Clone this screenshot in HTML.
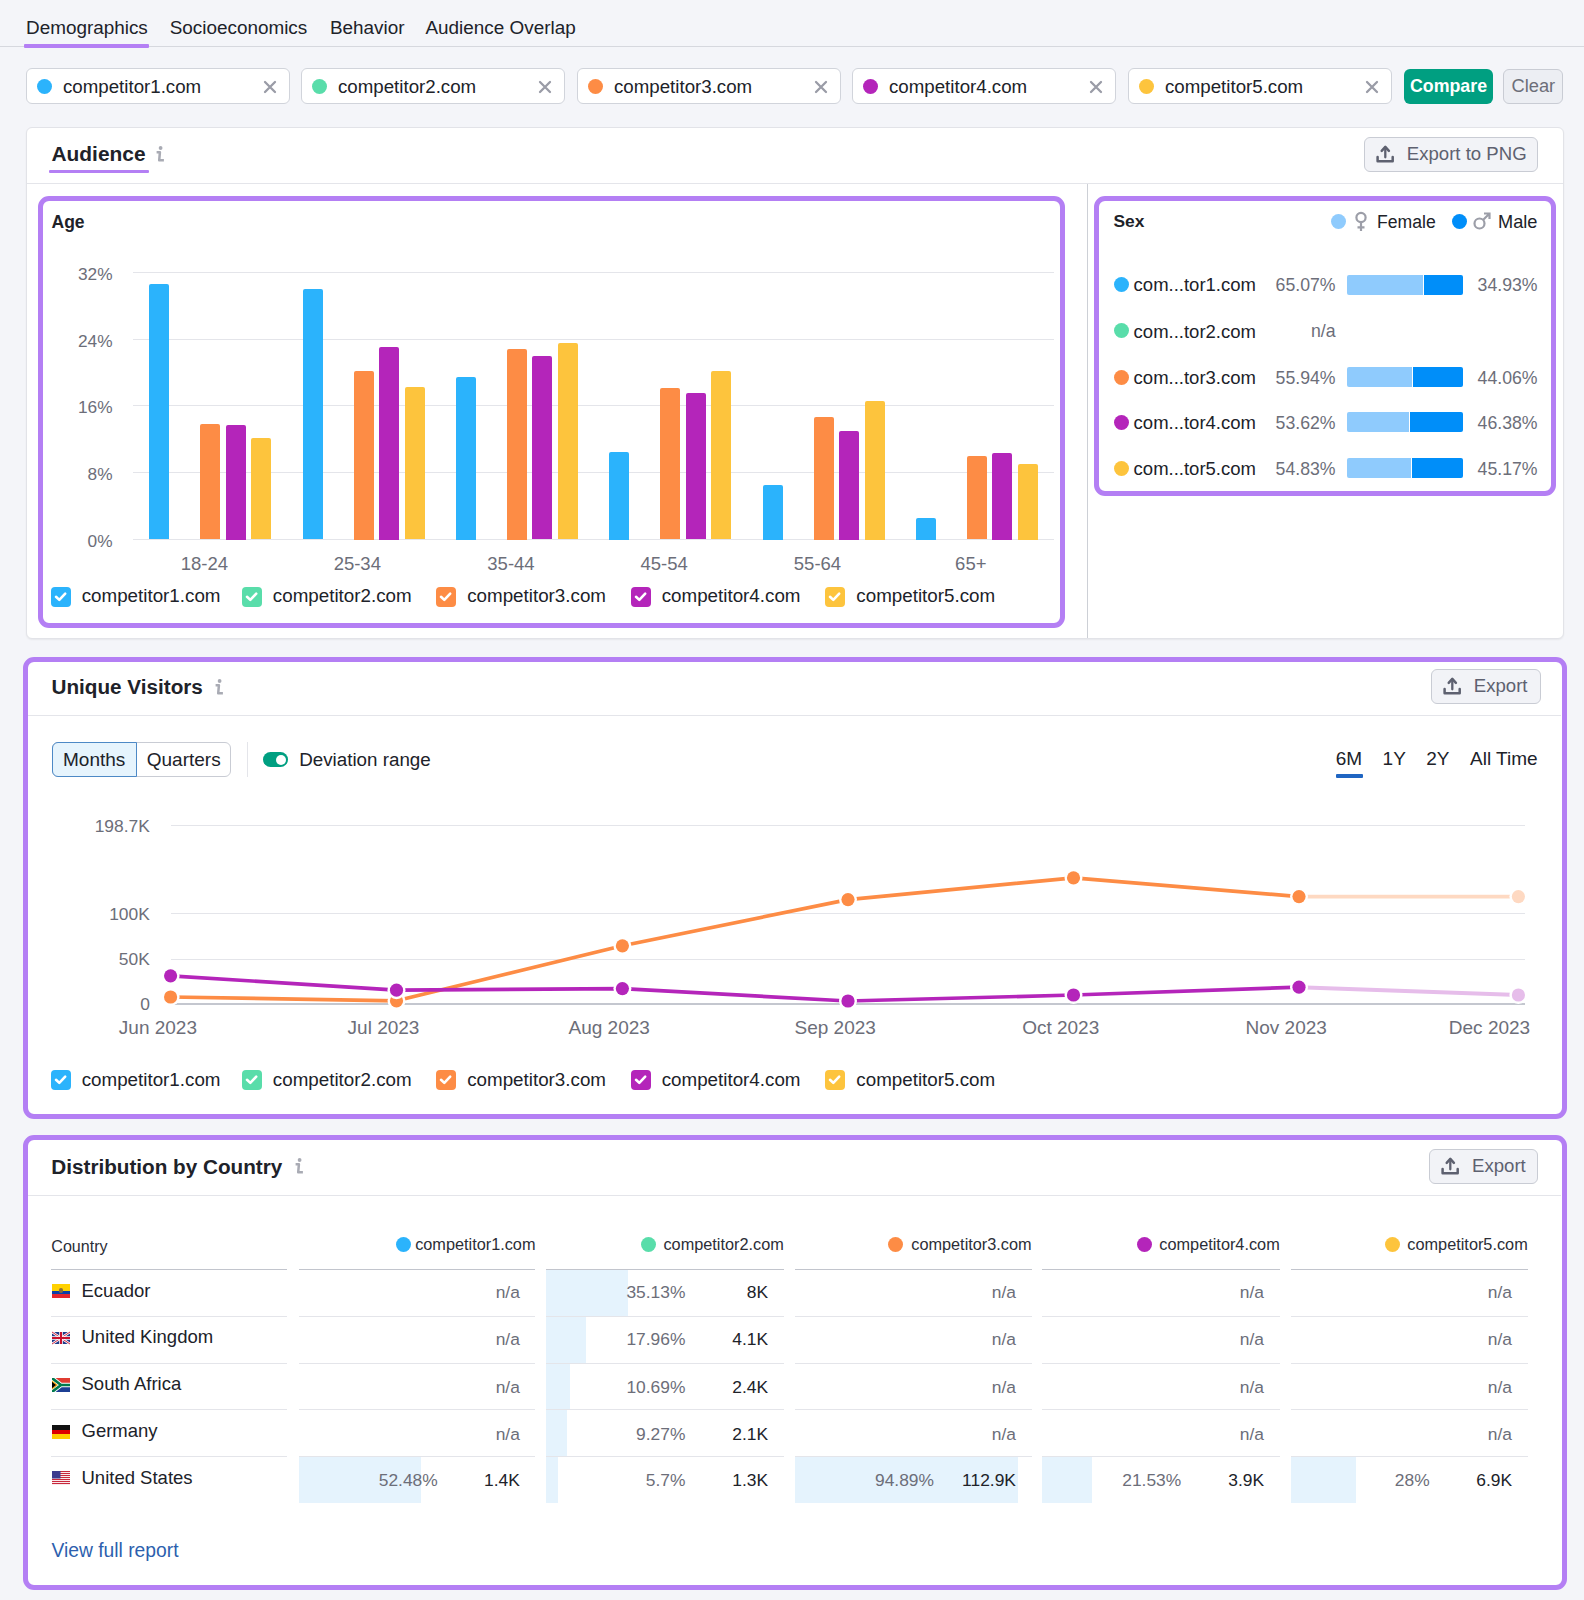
<!DOCTYPE html>
<html><head><meta charset="utf-8"><style>
html,body{margin:0;padding:0;}
body{width:1584px;height:1600px;background:#f4f5f9;position:relative;overflow:hidden;font-family:"Liberation Sans", sans-serif;}
.t{position:absolute;white-space:nowrap;}
.r{position:absolute;}
</style></head><body>
<div class="r" style="left:0.0px;top:46.0px;width:1584.0px;height:1.0px;background:#d6d8de;"></div>
<div class="t" style="left:26.0px;top:17px;font-size:18.9px;line-height:21px;color:#202229;">Demographics</div>
<div class="t" style="left:169.7px;top:17px;font-size:18.9px;line-height:21px;color:#202229;">Socioeconomics</div>
<div class="t" style="left:330.0px;top:17px;font-size:18.9px;line-height:21px;color:#202229;">Behavior</div>
<div class="t" style="left:425.5px;top:17px;font-size:18.9px;line-height:21px;color:#202229;">Audience Overlap</div>
<div class="r" style="left:24.0px;top:43.5px;width:125.0px;height:4.0px;background:#b47ff4;border-radius:1px;"></div>
<div class="r" style="left:26.0px;top:68.0px;width:264.0px;height:35.5px;background:#fff;border:1px solid #d1d4db;border-radius:6px;box-sizing:border-box;"></div>
<div class="r" style="left:36.8px;top:78.5px;width:15.4px;height:15.4px;background:#2bb3fc;border-radius:50%;"></div>
<div class="t" style="left:63.0px;top:76px;font-size:18.7px;line-height:21px;color:#202229;">competitor1.com</div>
<svg width="14" height="14" viewBox="0 0 14 14" style="position:absolute;left:263px;top:80px"><path d="M2 2 L12 12 M12 2 L2 12" stroke="#9a9ca7" stroke-width="2.3" stroke-linecap="round"/></svg>
<div class="r" style="left:301.0px;top:68.0px;width:264.0px;height:35.5px;background:#fff;border:1px solid #d1d4db;border-radius:6px;box-sizing:border-box;"></div>
<div class="r" style="left:311.8px;top:78.5px;width:15.4px;height:15.4px;background:#59ddaa;border-radius:50%;"></div>
<div class="t" style="left:338.0px;top:76px;font-size:18.7px;line-height:21px;color:#202229;">competitor2.com</div>
<svg width="14" height="14" viewBox="0 0 14 14" style="position:absolute;left:538px;top:80px"><path d="M2 2 L12 12 M12 2 L2 12" stroke="#9a9ca7" stroke-width="2.3" stroke-linecap="round"/></svg>
<div class="r" style="left:577.0px;top:68.0px;width:264.0px;height:35.5px;background:#fff;border:1px solid #d1d4db;border-radius:6px;box-sizing:border-box;"></div>
<div class="r" style="left:587.8px;top:78.5px;width:15.4px;height:15.4px;background:#fd8c45;border-radius:50%;"></div>
<div class="t" style="left:614.0px;top:76px;font-size:18.7px;line-height:21px;color:#202229;">competitor3.com</div>
<svg width="14" height="14" viewBox="0 0 14 14" style="position:absolute;left:814px;top:80px"><path d="M2 2 L12 12 M12 2 L2 12" stroke="#9a9ca7" stroke-width="2.3" stroke-linecap="round"/></svg>
<div class="r" style="left:852.0px;top:68.0px;width:264.0px;height:35.5px;background:#fff;border:1px solid #d1d4db;border-radius:6px;box-sizing:border-box;"></div>
<div class="r" style="left:862.8px;top:78.5px;width:15.4px;height:15.4px;background:#b425ba;border-radius:50%;"></div>
<div class="t" style="left:889.0px;top:76px;font-size:18.7px;line-height:21px;color:#202229;">competitor4.com</div>
<svg width="14" height="14" viewBox="0 0 14 14" style="position:absolute;left:1089px;top:80px"><path d="M2 2 L12 12 M12 2 L2 12" stroke="#9a9ca7" stroke-width="2.3" stroke-linecap="round"/></svg>
<div class="r" style="left:1128.0px;top:68.0px;width:264.0px;height:35.5px;background:#fff;border:1px solid #d1d4db;border-radius:6px;box-sizing:border-box;"></div>
<div class="r" style="left:1138.8px;top:78.5px;width:15.4px;height:15.4px;background:#fdc43d;border-radius:50%;"></div>
<div class="t" style="left:1165.0px;top:76px;font-size:18.7px;line-height:21px;color:#202229;">competitor5.com</div>
<svg width="14" height="14" viewBox="0 0 14 14" style="position:absolute;left:1365px;top:80px"><path d="M2 2 L12 12 M12 2 L2 12" stroke="#9a9ca7" stroke-width="2.3" stroke-linecap="round"/></svg>
<div class="r" style="left:1404.0px;top:68.5px;width:89.0px;height:35.5px;background:#009f81;border-radius:6px;"></div>
<div class="t" style="left:1148.5px;width:600px;text-align:center;top:76px;font-size:17.8px;line-height:20px;color:#fff;font-weight:700;">Compare</div>
<div class="r" style="left:1503.4px;top:68.5px;width:59.6px;height:35.5px;background:#eceef3;border:1px solid #c9ccd4;border-radius:6px;box-sizing:border-box;"></div>
<div class="t" style="left:1233.3px;width:600px;text-align:center;top:75px;font-size:18.3px;line-height:21px;color:#6c6e79;">Clear</div>
<div class="r" style="left:26.0px;top:127.0px;width:1537.5px;height:512.0px;background:#fff;border:1px solid #e2e3e8;border-radius:6px;box-sizing:border-box;box-shadow:0 1px 2px rgba(0,0,0,0.06);"></div>
<div class="t" style="left:51.5px;top:142px;font-size:20.9px;line-height:23px;color:#202229;font-weight:700;">Audience</div>
<div class="r" style="left:49.0px;top:170.0px;width:100.2px;height:3.0px;background:#b47ff4;border-radius:1px;"></div>
<svg width="12" height="18" viewBox="0 0 12 18" style="position:absolute;left:155.4px;top:144.7px"><circle cx="5.6" cy="3" r="1.9" fill="#a9abb4"/><path d="M1.6 7.3 H4.9 L4.2 15.3 H8.9" stroke="#a9abb4" stroke-width="2.5" fill="none" stroke-linejoin="round"/></svg>
<div class="r" style="left:1364.1px;top:136.9px;width:173.7px;height:35.0px;background:#f2f3f7;border:1px solid #c9ccd4;border-radius:6px;box-sizing:border-box;"></div>
<svg width="18" height="18" viewBox="0 0 18 18" style="position:absolute;left:1376px;top:145.0px;overflow:visible"><path d="M5.7 5.8 L9.3 1.9 L12.9 5.8" stroke="#5e6170" stroke-width="2.5" fill="none" stroke-linecap="round" stroke-linejoin="round"/><path d="M9.3 2.6 V12.3" stroke="#5e6170" stroke-width="2.3" fill="none" stroke-linecap="round"/><path d="M1.6 11.9 V16.3 H16.7 V11.9" stroke="#5e6170" stroke-width="2.5" fill="none" stroke-linecap="round" stroke-linejoin="round"/></svg>
<div class="t" style="left:1406.8px;top:143px;font-size:18.6px;line-height:21px;color:#5e6170;">Export to PNG</div>
<div class="r" style="left:27.0px;top:183.0px;width:1536.0px;height:1.0px;background:#e4e5ea;"></div>
<div class="r" style="left:1086.5px;top:184.0px;width:1.0px;height:454.0px;background:#cdd0d6;"></div>
<div class="r" style="left:38.0px;top:196.3px;width:1027.0px;height:431.5px;border:5px solid #b47ff4;border-radius:11px;box-sizing:border-box;"></div>
<div class="t" style="left:51.5px;top:212px;font-size:17.5px;line-height:20px;color:#202229;font-weight:700;">Age</div>
<div class="r" style="left:133.4px;top:539.0px;width:920.9px;height:1.0px;background:#e4e5ea;"></div>
<div class="t" style="right:1471.5px;text-align:right;top:531px;font-size:17.3px;line-height:20px;color:#6c6e79;">0%</div>
<div class="r" style="left:133.4px;top:472.2px;width:920.9px;height:1.0px;background:#e4e5ea;"></div>
<div class="t" style="right:1471.5px;text-align:right;top:464px;font-size:17.3px;line-height:20px;color:#6c6e79;">8%</div>
<div class="r" style="left:133.4px;top:405.3px;width:920.9px;height:1.0px;background:#e4e5ea;"></div>
<div class="t" style="right:1471.5px;text-align:right;top:397px;font-size:17.3px;line-height:20px;color:#6c6e79;">16%</div>
<div class="r" style="left:133.4px;top:338.5px;width:920.9px;height:1.0px;background:#e4e5ea;"></div>
<div class="t" style="right:1471.5px;text-align:right;top:331px;font-size:17.3px;line-height:20px;color:#6c6e79;">24%</div>
<div class="r" style="left:133.4px;top:271.8px;width:920.9px;height:1.0px;background:#e4e5ea;"></div>
<div class="t" style="right:1471.5px;text-align:right;top:264px;font-size:17.3px;line-height:20px;color:#6c6e79;">32%</div>
<div class="r" style="left:149.3px;top:283.6px;width:20.0px;height:255.9px;background:#2bb3fc;border-radius:2px 2px 0 0;"></div>
<div class="r" style="left:200.3px;top:424.2px;width:20.0px;height:115.3px;background:#fd8c45;border-radius:2px 2px 0 0;"></div>
<div class="r" style="left:225.8px;top:424.5px;width:20.0px;height:115.0px;background:#b425ba;border-radius:2px 2px 0 0;"></div>
<div class="r" style="left:251.3px;top:438.4px;width:20.0px;height:101.1px;background:#fdc43d;border-radius:2px 2px 0 0;"></div>
<div class="r" style="left:302.6px;top:289.1px;width:20.0px;height:250.4px;background:#2bb3fc;border-radius:2px 2px 0 0;"></div>
<div class="r" style="left:353.6px;top:370.5px;width:20.0px;height:169.0px;background:#fd8c45;border-radius:2px 2px 0 0;"></div>
<div class="r" style="left:379.1px;top:347.0px;width:20.0px;height:192.5px;background:#b425ba;border-radius:2px 2px 0 0;"></div>
<div class="r" style="left:404.6px;top:386.6px;width:20.0px;height:152.9px;background:#fdc43d;border-radius:2px 2px 0 0;"></div>
<div class="r" style="left:455.9px;top:377.0px;width:20.0px;height:162.5px;background:#2bb3fc;border-radius:2px 2px 0 0;"></div>
<div class="r" style="left:506.9px;top:348.5px;width:20.0px;height:191.0px;background:#fd8c45;border-radius:2px 2px 0 0;"></div>
<div class="r" style="left:532.4px;top:355.6px;width:20.0px;height:183.9px;background:#b425ba;border-radius:2px 2px 0 0;"></div>
<div class="r" style="left:557.9px;top:343.4px;width:20.0px;height:196.1px;background:#fdc43d;border-radius:2px 2px 0 0;"></div>
<div class="r" style="left:609.2px;top:452.0px;width:20.0px;height:87.5px;background:#2bb3fc;border-radius:2px 2px 0 0;"></div>
<div class="r" style="left:660.2px;top:387.6px;width:20.0px;height:151.9px;background:#fd8c45;border-radius:2px 2px 0 0;"></div>
<div class="r" style="left:685.7px;top:393.2px;width:20.0px;height:146.3px;background:#b425ba;border-radius:2px 2px 0 0;"></div>
<div class="r" style="left:711.2px;top:371.2px;width:20.0px;height:168.3px;background:#fdc43d;border-radius:2px 2px 0 0;"></div>
<div class="r" style="left:762.5px;top:485.0px;width:20.0px;height:54.5px;background:#2bb3fc;border-radius:2px 2px 0 0;"></div>
<div class="r" style="left:813.5px;top:416.8px;width:20.0px;height:122.8px;background:#fd8c45;border-radius:2px 2px 0 0;"></div>
<div class="r" style="left:839.0px;top:430.5px;width:20.0px;height:109.0px;background:#b425ba;border-radius:2px 2px 0 0;"></div>
<div class="r" style="left:864.5px;top:400.5px;width:20.0px;height:139.0px;background:#fdc43d;border-radius:2px 2px 0 0;"></div>
<div class="r" style="left:915.8px;top:518.0px;width:20.0px;height:21.5px;background:#2bb3fc;border-radius:2px 2px 0 0;"></div>
<div class="r" style="left:966.8px;top:456.2px;width:20.0px;height:83.2px;background:#fd8c45;border-radius:2px 2px 0 0;"></div>
<div class="r" style="left:992.3px;top:453.0px;width:20.0px;height:86.5px;background:#b425ba;border-radius:2px 2px 0 0;"></div>
<div class="r" style="left:1017.8px;top:463.8px;width:20.0px;height:75.8px;background:#fdc43d;border-radius:2px 2px 0 0;"></div>
<div class="t" style="left:-95.6px;width:600px;text-align:center;top:553px;font-size:18.5px;line-height:21px;color:#6c6e79;">18-24</div>
<div class="t" style="left:57.3px;width:600px;text-align:center;top:553px;font-size:18.5px;line-height:21px;color:#6c6e79;">25-34</div>
<div class="t" style="left:211.0px;width:600px;text-align:center;top:553px;font-size:18.5px;line-height:21px;color:#6c6e79;">35-44</div>
<div class="t" style="left:364.2px;width:600px;text-align:center;top:553px;font-size:18.5px;line-height:21px;color:#6c6e79;">45-54</div>
<div class="t" style="left:517.5px;width:600px;text-align:center;top:553px;font-size:18.5px;line-height:21px;color:#6c6e79;">55-64</div>
<div class="t" style="left:670.8px;width:600px;text-align:center;top:553px;font-size:18.5px;line-height:21px;color:#6c6e79;">65+</div>
<div class="r" style="left:51.4px;top:586.5px;width:20px;height:20px;background:#2bb3fc;border-radius:4px;"><svg width="20" height="20" viewBox="0 0 20 20" style="position:absolute;left:0;top:0"><path d="M5 9.8 L8.3 12.9 L14.2 6.7" stroke="#fff" stroke-width="2.6" fill="none" stroke-linecap="round" stroke-linejoin="round"/></svg></div>
<div class="t" style="left:81.7px;top:585px;font-size:18.8px;line-height:21px;color:#202229;">competitor1.com</div>
<div class="r" style="left:242px;top:586.5px;width:20px;height:20px;background:#59ddaa;border-radius:4px;"><svg width="20" height="20" viewBox="0 0 20 20" style="position:absolute;left:0;top:0"><path d="M5 9.8 L8.3 12.9 L14.2 6.7" stroke="#fff" stroke-width="2.6" fill="none" stroke-linecap="round" stroke-linejoin="round"/></svg></div>
<div class="t" style="left:272.8px;top:585px;font-size:18.8px;line-height:21px;color:#202229;">competitor2.com</div>
<div class="r" style="left:436.4px;top:586.5px;width:20px;height:20px;background:#fd8c45;border-radius:4px;"><svg width="20" height="20" viewBox="0 0 20 20" style="position:absolute;left:0;top:0"><path d="M5 9.8 L8.3 12.9 L14.2 6.7" stroke="#fff" stroke-width="2.6" fill="none" stroke-linecap="round" stroke-linejoin="round"/></svg></div>
<div class="t" style="left:467.2px;top:585px;font-size:18.8px;line-height:21px;color:#202229;">competitor3.com</div>
<div class="r" style="left:630.9px;top:586.5px;width:20px;height:20px;background:#b425ba;border-radius:4px;"><svg width="20" height="20" viewBox="0 0 20 20" style="position:absolute;left:0;top:0"><path d="M5 9.8 L8.3 12.9 L14.2 6.7" stroke="#fff" stroke-width="2.6" fill="none" stroke-linecap="round" stroke-linejoin="round"/></svg></div>
<div class="t" style="left:661.7px;top:585px;font-size:18.8px;line-height:21px;color:#202229;">competitor4.com</div>
<div class="r" style="left:825px;top:586.5px;width:20px;height:20px;background:#fdc43d;border-radius:4px;"><svg width="20" height="20" viewBox="0 0 20 20" style="position:absolute;left:0;top:0"><path d="M5 9.8 L8.3 12.9 L14.2 6.7" stroke="#fff" stroke-width="2.6" fill="none" stroke-linecap="round" stroke-linejoin="round"/></svg></div>
<div class="t" style="left:856.3px;top:585px;font-size:18.8px;line-height:21px;color:#202229;">competitor5.com</div>
<div class="r" style="left:1094.1px;top:196.4px;width:462.4px;height:299.9px;border:5px solid #b47ff4;border-radius:11px;box-sizing:border-box;"></div>
<div class="t" style="left:1113.4px;top:211px;font-size:17.4px;line-height:20px;color:#202229;font-weight:700;">Sex</div>
<div class="r" style="left:1330.5px;top:214.2px;width:15.0px;height:15.0px;background:#8fcbfd;border-radius:50%;"></div>
<div class="r" style="left:1451.5px;top:214.2px;width:15.0px;height:15.0px;background:#008ef9;border-radius:50%;"></div>
<svg width="16" height="22" viewBox="0 0 16 22" style="position:absolute;left:1353px;top:211px"><circle cx="8" cy="6.5" r="4.6" stroke="#9c9ea8" stroke-width="2.2" fill="none"/><path d="M8 11 V20 M4.5 16.3 H11.5" stroke="#9c9ea8" stroke-width="2.2" fill="none"/></svg>
<svg width="20" height="20" viewBox="0 0 20 20" style="position:absolute;left:1472px;top:211px"><circle cx="7.5" cy="12.5" r="5" stroke="#9c9ea8" stroke-width="2.2" fill="none"/><path d="M11 9 L17.5 2.5 M12 2.5 H17.5 V8" stroke="#9c9ea8" stroke-width="2.2" fill="none"/></svg>
<div class="t" style="left:1377.0px;top:212px;font-size:17.6px;line-height:20px;color:#202229;">Female</div>
<div class="t" style="left:1498.0px;top:212px;font-size:18.2px;line-height:20px;color:#202229;">Male</div>
<div class="r" style="left:1113.5px;top:277.3px;width:15.0px;height:15.0px;background:#2bb3fc;border-radius:50%;"></div>
<div class="t" style="left:1133.6px;top:274px;font-size:18.5px;line-height:21px;color:#202229;">com...tor1.com</div>
<div class="t" style="right:248.4px;text-align:right;top:275px;font-size:17.7px;line-height:20px;color:#6c6e79;">65.07%</div>
<div class="r" style="left:1346.6px;top:274.8px;width:76.0px;height:20.0px;background:#8fcbfd;border-radius:2px 0 0 2px;"></div>
<div class="r" style="left:1423.6px;top:274.8px;width:39.8px;height:20.0px;background:#008ef9;border-radius:0 2px 2px 0;"></div>
<div class="t" style="right:46.4px;text-align:right;top:275px;font-size:17.7px;line-height:20px;color:#6c6e79;">34.93%</div>
<div class="r" style="left:1113.5px;top:323.4px;width:15.0px;height:15.0px;background:#59ddaa;border-radius:50%;"></div>
<div class="t" style="left:1133.6px;top:321px;font-size:18.5px;line-height:21px;color:#202229;">com...tor2.com</div>
<div class="t" style="right:248.4px;text-align:right;top:321px;font-size:17.7px;line-height:20px;color:#6c6e79;">n/a</div>
<div class="r" style="left:1113.5px;top:369.8px;width:15.0px;height:15.0px;background:#fd8c45;border-radius:50%;"></div>
<div class="t" style="left:1133.6px;top:367px;font-size:18.5px;line-height:21px;color:#202229;">com...tor3.com</div>
<div class="t" style="right:248.4px;text-align:right;top:368px;font-size:17.7px;line-height:20px;color:#6c6e79;">55.94%</div>
<div class="r" style="left:1346.6px;top:367.3px;width:65.3px;height:20.0px;background:#8fcbfd;border-radius:2px 0 0 2px;"></div>
<div class="r" style="left:1412.9px;top:367.3px;width:50.5px;height:20.0px;background:#008ef9;border-radius:0 2px 2px 0;"></div>
<div class="t" style="right:46.4px;text-align:right;top:368px;font-size:17.7px;line-height:20px;color:#6c6e79;">44.06%</div>
<div class="r" style="left:1113.5px;top:414.9px;width:15.0px;height:15.0px;background:#b425ba;border-radius:50%;"></div>
<div class="t" style="left:1133.6px;top:412px;font-size:18.5px;line-height:21px;color:#202229;">com...tor4.com</div>
<div class="t" style="right:248.4px;text-align:right;top:413px;font-size:17.7px;line-height:20px;color:#6c6e79;">53.62%</div>
<div class="r" style="left:1346.6px;top:412.4px;width:62.6px;height:20.0px;background:#8fcbfd;border-radius:2px 0 0 2px;"></div>
<div class="r" style="left:1410.2px;top:412.4px;width:53.2px;height:20.0px;background:#008ef9;border-radius:0 2px 2px 0;"></div>
<div class="t" style="right:46.4px;text-align:right;top:413px;font-size:17.7px;line-height:20px;color:#6c6e79;">46.38%</div>
<div class="r" style="left:1113.5px;top:460.7px;width:15.0px;height:15.0px;background:#fdc43d;border-radius:50%;"></div>
<div class="t" style="left:1133.6px;top:458px;font-size:18.5px;line-height:21px;color:#202229;">com...tor5.com</div>
<div class="t" style="right:248.4px;text-align:right;top:459px;font-size:17.7px;line-height:20px;color:#6c6e79;">54.83%</div>
<div class="r" style="left:1346.6px;top:458.2px;width:64.0px;height:20.0px;background:#8fcbfd;border-radius:2px 0 0 2px;"></div>
<div class="r" style="left:1411.6px;top:458.2px;width:51.8px;height:20.0px;background:#008ef9;border-radius:0 2px 2px 0;"></div>
<div class="t" style="right:46.4px;text-align:right;top:459px;font-size:17.7px;line-height:20px;color:#6c6e79;">45.17%</div>
<div class="r" style="left:26.0px;top:659.0px;width:1537.5px;height:457.0px;background:#fff;border-radius:6px;"></div>
<div class="r" style="left:23.0px;top:656.5px;width:1544.0px;height:462.5px;border:5px solid #b47ff4;border-radius:11px;box-sizing:border-box;"></div>
<div class="t" style="left:51.5px;top:675px;font-size:20.7px;line-height:23px;color:#202229;font-weight:700;">Unique Visitors</div>
<svg width="12" height="18" viewBox="0 0 12 18" style="position:absolute;left:214.0px;top:678.0px"><circle cx="5.6" cy="3" r="1.9" fill="#a9abb4"/><path d="M1.6 7.3 H4.9 L4.2 15.3 H8.9" stroke="#a9abb4" stroke-width="2.5" fill="none" stroke-linejoin="round"/></svg>
<div class="r" style="left:1431.2px;top:669.2px;width:109.5px;height:35.2px;background:#f2f3f7;border:1px solid #c9ccd4;border-radius:6px;box-sizing:border-box;"></div>
<svg width="18" height="18" viewBox="0 0 18 18" style="position:absolute;left:1443.3px;top:677.4px;overflow:visible"><path d="M5.7 5.8 L9.3 1.9 L12.9 5.8" stroke="#5e6170" stroke-width="2.5" fill="none" stroke-linecap="round" stroke-linejoin="round"/><path d="M9.3 2.6 V12.3" stroke="#5e6170" stroke-width="2.3" fill="none" stroke-linecap="round"/><path d="M1.6 11.9 V16.3 H16.7 V11.9" stroke="#5e6170" stroke-width="2.5" fill="none" stroke-linecap="round" stroke-linejoin="round"/></svg>
<div class="t" style="left:1473.8px;top:675px;font-size:18.6px;line-height:21px;color:#5e6170;">Export</div>
<div class="r" style="left:28.0px;top:715.0px;width:1533.0px;height:1.0px;background:#e4e5ea;"></div>
<div class="r" style="left:51.5px;top:741.6px;width:179.5px;height:35.1px;border:1px solid #c9ccd4;border-radius:6px;box-sizing:border-box;background:#fff;"></div>
<div class="r" style="left:51.5px;top:741.6px;width:85.4px;height:35.1px;border:1px solid #4d89c6;border-radius:6px 0 0 6px;box-sizing:border-box;background:#e6f4fd;"></div>
<div class="t" style="left:-205.8px;width:600px;text-align:center;top:749px;font-size:19px;line-height:21px;color:#202229;">Months</div>
<div class="t" style="left:-116.3px;width:600px;text-align:center;top:749px;font-size:19px;line-height:21px;color:#202229;">Quarters</div>
<div class="r" style="left:246.7px;top:742.0px;width:1.0px;height:35.0px;background:#e4e5ea;"></div>
<div class="r" style="left:263.0px;top:752.0px;width:25.2px;height:15.0px;background:#009f81;border-radius:8px;"></div>
<div class="r" style="left:275.7px;top:754.5px;width:10.0px;height:10.0px;background:#fff;border-radius:50%;"></div>
<div class="t" style="left:299.2px;top:749px;font-size:18.8px;line-height:21px;color:#202229;">Deviation range</div>
<div class="t" style="left:1049.0px;width:600px;text-align:center;top:748px;font-size:19px;line-height:21px;color:#202229;">6M</div>
<div class="t" style="left:1094.2px;width:600px;text-align:center;top:748px;font-size:19px;line-height:21px;color:#202229;">1Y</div>
<div class="t" style="left:1137.8px;width:600px;text-align:center;top:748px;font-size:19px;line-height:21px;color:#202229;">2Y</div>
<div class="t" style="left:1203.8px;width:600px;text-align:center;top:748px;font-size:19px;line-height:21px;color:#202229;">All Time</div>
<div class="r" style="left:1335.6px;top:774.2px;width:27.1px;height:3.8px;background:#1f65c2;border-radius:1px;"></div>
<div class="r" style="left:170.6px;top:825.0px;width:1354.4px;height:1.0px;background:#e4e5ea;"></div>
<div class="t" style="right:1434.2px;text-align:right;top:816px;font-size:17.4px;line-height:20px;color:#6c6e79;">198.7K</div>
<div class="r" style="left:170.6px;top:913.3px;width:1354.4px;height:1.0px;background:#e4e5ea;"></div>
<div class="t" style="right:1434.2px;text-align:right;top:904px;font-size:17.4px;line-height:20px;color:#6c6e79;">100K</div>
<div class="r" style="left:170.6px;top:958.5px;width:1354.4px;height:1.0px;background:#e4e5ea;"></div>
<div class="t" style="right:1434.2px;text-align:right;top:949px;font-size:17.4px;line-height:20px;color:#6c6e79;">50K</div>
<div class="r" style="left:170.6px;top:1003.1px;width:1354.4px;height:1.5px;background:#c4c7cf;"></div>
<div class="t" style="right:1434.2px;text-align:right;top:994px;font-size:17.4px;line-height:20px;color:#6c6e79;">0</div>
<svg width="1584" height="1600" style="position:absolute;left:0;top:0"><polyline points="170.6,997.0 396.5,1000.8 622.4,945.8 848.0,899.6 1073.5,877.8 1299.0,896.6" stroke="#fd8c45" stroke-width="3.7" fill="none" stroke-linejoin="round"/><line x1="1299.0" y1="896.6" x2="1518.4" y2="896.6" stroke="#fed9c2" stroke-width="3.9"/><circle cx="170.6" cy="997.0" r="9" fill="#fff"/><circle cx="170.6" cy="997.0" r="6.6" fill="#fd8c45"/><circle cx="396.5" cy="1000.8" r="9" fill="#fff"/><circle cx="396.5" cy="1000.8" r="6.6" fill="#fd8c45"/><circle cx="622.4" cy="945.8" r="9" fill="#fff"/><circle cx="622.4" cy="945.8" r="6.6" fill="#fd8c45"/><circle cx="848.0" cy="899.6" r="9" fill="#fff"/><circle cx="848.0" cy="899.6" r="6.6" fill="#fd8c45"/><circle cx="1073.5" cy="877.8" r="9" fill="#fff"/><circle cx="1073.5" cy="877.8" r="6.6" fill="#fd8c45"/><circle cx="1299.0" cy="896.6" r="9" fill="#fff"/><circle cx="1299.0" cy="896.6" r="6.6" fill="#fd8c45"/><circle cx="1518.4" cy="896.6" r="9" fill="#fff"/><circle cx="1518.4" cy="896.6" r="6.6" fill="#fed9c2"/><polyline points="170.6,975.8 396.5,990.2 622.4,988.6 848.0,1001.0 1073.5,995.0 1299.0,987.2" stroke="#b425ba" stroke-width="3.7" fill="none" stroke-linejoin="round"/><line x1="1299.0" y1="987.2" x2="1518.4" y2="995.0" stroke="#e6bdea" stroke-width="3.9"/><circle cx="170.6" cy="975.8" r="9" fill="#fff"/><circle cx="170.6" cy="975.8" r="6.6" fill="#b425ba"/><circle cx="396.5" cy="990.2" r="9" fill="#fff"/><circle cx="396.5" cy="990.2" r="6.6" fill="#b425ba"/><circle cx="622.4" cy="988.6" r="9" fill="#fff"/><circle cx="622.4" cy="988.6" r="6.6" fill="#b425ba"/><circle cx="848.0" cy="1001.0" r="9" fill="#fff"/><circle cx="848.0" cy="1001.0" r="6.6" fill="#b425ba"/><circle cx="1073.5" cy="995.0" r="9" fill="#fff"/><circle cx="1073.5" cy="995.0" r="6.6" fill="#b425ba"/><circle cx="1299.0" cy="987.2" r="9" fill="#fff"/><circle cx="1299.0" cy="987.2" r="6.6" fill="#b425ba"/><circle cx="1518.4" cy="995.0" r="9" fill="#fff"/><circle cx="1518.4" cy="995.0" r="6.6" fill="#e6bdea"/></svg>
<div class="t" style="left:-142.1px;width:600px;text-align:center;top:1017px;font-size:19px;line-height:21px;color:#6c6e79;">Jun 2023</div>
<div class="t" style="left:83.5px;width:600px;text-align:center;top:1017px;font-size:19px;line-height:21px;color:#6c6e79;">Jul 2023</div>
<div class="t" style="left:309.2px;width:600px;text-align:center;top:1017px;font-size:19px;line-height:21px;color:#6c6e79;">Aug 2023</div>
<div class="t" style="left:535.2px;width:600px;text-align:center;top:1017px;font-size:19px;line-height:21px;color:#6c6e79;">Sep 2023</div>
<div class="t" style="left:760.7px;width:600px;text-align:center;top:1017px;font-size:19px;line-height:21px;color:#6c6e79;">Oct 2023</div>
<div class="t" style="left:986.2px;width:600px;text-align:center;top:1017px;font-size:19px;line-height:21px;color:#6c6e79;">Nov 2023</div>
<div class="t" style="left:1189.5px;width:600px;text-align:center;top:1017px;font-size:19px;line-height:21px;color:#6c6e79;">Dec 2023</div>
<div class="r" style="left:51.4px;top:1070px;width:20px;height:20px;background:#2bb3fc;border-radius:4px;"><svg width="20" height="20" viewBox="0 0 20 20" style="position:absolute;left:0;top:0"><path d="M5 9.8 L8.3 12.9 L14.2 6.7" stroke="#fff" stroke-width="2.6" fill="none" stroke-linecap="round" stroke-linejoin="round"/></svg></div>
<div class="t" style="left:81.7px;top:1069px;font-size:18.8px;line-height:21px;color:#202229;">competitor1.com</div>
<div class="r" style="left:242px;top:1070px;width:20px;height:20px;background:#59ddaa;border-radius:4px;"><svg width="20" height="20" viewBox="0 0 20 20" style="position:absolute;left:0;top:0"><path d="M5 9.8 L8.3 12.9 L14.2 6.7" stroke="#fff" stroke-width="2.6" fill="none" stroke-linecap="round" stroke-linejoin="round"/></svg></div>
<div class="t" style="left:272.8px;top:1069px;font-size:18.8px;line-height:21px;color:#202229;">competitor2.com</div>
<div class="r" style="left:436.4px;top:1070px;width:20px;height:20px;background:#fd8c45;border-radius:4px;"><svg width="20" height="20" viewBox="0 0 20 20" style="position:absolute;left:0;top:0"><path d="M5 9.8 L8.3 12.9 L14.2 6.7" stroke="#fff" stroke-width="2.6" fill="none" stroke-linecap="round" stroke-linejoin="round"/></svg></div>
<div class="t" style="left:467.2px;top:1069px;font-size:18.8px;line-height:21px;color:#202229;">competitor3.com</div>
<div class="r" style="left:630.9px;top:1070px;width:20px;height:20px;background:#b425ba;border-radius:4px;"><svg width="20" height="20" viewBox="0 0 20 20" style="position:absolute;left:0;top:0"><path d="M5 9.8 L8.3 12.9 L14.2 6.7" stroke="#fff" stroke-width="2.6" fill="none" stroke-linecap="round" stroke-linejoin="round"/></svg></div>
<div class="t" style="left:661.7px;top:1069px;font-size:18.8px;line-height:21px;color:#202229;">competitor4.com</div>
<div class="r" style="left:825px;top:1070px;width:20px;height:20px;background:#fdc43d;border-radius:4px;"><svg width="20" height="20" viewBox="0 0 20 20" style="position:absolute;left:0;top:0"><path d="M5 9.8 L8.3 12.9 L14.2 6.7" stroke="#fff" stroke-width="2.6" fill="none" stroke-linecap="round" stroke-linejoin="round"/></svg></div>
<div class="t" style="left:856.3px;top:1069px;font-size:18.8px;line-height:21px;color:#202229;">competitor5.com</div>
<div class="r" style="left:26.0px;top:1138.0px;width:1537.5px;height:449.0px;background:#fff;border-radius:6px;"></div>
<div class="r" style="left:23.0px;top:1135.0px;width:1543.5px;height:455.3px;border:5px solid #b47ff4;border-radius:11px;box-sizing:border-box;"></div>
<div class="t" style="left:51.3px;top:1155px;font-size:20.7px;line-height:23px;color:#202229;font-weight:700;">Distribution by Country</div>
<svg width="12" height="18" viewBox="0 0 12 18" style="position:absolute;left:294.4px;top:1157.4px"><circle cx="5.6" cy="3" r="1.9" fill="#a9abb4"/><path d="M1.6 7.3 H4.9 L4.2 15.3 H8.9" stroke="#a9abb4" stroke-width="2.5" fill="none" stroke-linejoin="round"/></svg>
<div class="r" style="left:1429.4px;top:1149.4px;width:108.6px;height:34.6px;background:#f2f3f7;border:1px solid #c9ccd4;border-radius:6px;box-sizing:border-box;"></div>
<svg width="18" height="18" viewBox="0 0 18 18" style="position:absolute;left:1441px;top:1157.3px;overflow:visible"><path d="M5.7 5.8 L9.3 1.9 L12.9 5.8" stroke="#5e6170" stroke-width="2.5" fill="none" stroke-linecap="round" stroke-linejoin="round"/><path d="M9.3 2.6 V12.3" stroke="#5e6170" stroke-width="2.3" fill="none" stroke-linecap="round"/><path d="M1.6 11.9 V16.3 H16.7 V11.9" stroke="#5e6170" stroke-width="2.5" fill="none" stroke-linecap="round" stroke-linejoin="round"/></svg>
<div class="t" style="left:1472.0px;top:1155px;font-size:18.6px;line-height:21px;color:#5e6170;">Export</div>
<div class="r" style="left:28.0px;top:1195.0px;width:1533.0px;height:1.0px;background:#e4e5ea;"></div>
<div class="t" style="left:51.3px;top:1237px;font-size:16.1px;line-height:18px;color:#2c2e37;">Country</div>
<div class="r" style="left:51.3px;top:1268.7px;width:236.1px;height:1.3px;background:#c2c5cd;"></div>
<div class="r" style="left:51.3px;top:1315.7px;width:236.1px;height:1.0px;background:#e4e5ea;"></div>
<div class="r" style="left:51.3px;top:1362.6px;width:236.1px;height:1.0px;background:#e4e5ea;"></div>
<div class="r" style="left:51.3px;top:1409.3px;width:236.1px;height:1.0px;background:#e4e5ea;"></div>
<div class="r" style="left:51.3px;top:1455.9px;width:236.1px;height:1.0px;background:#e4e5ea;"></div>
<div class="r" style="left:298.7px;top:1268.7px;width:236.8px;height:1.3px;background:#c2c5cd;"></div>
<div class="r" style="left:298.7px;top:1315.7px;width:236.8px;height:1.0px;background:#e4e5ea;"></div>
<div class="r" style="left:298.7px;top:1362.6px;width:236.8px;height:1.0px;background:#e4e5ea;"></div>
<div class="r" style="left:298.7px;top:1409.3px;width:236.8px;height:1.0px;background:#e4e5ea;"></div>
<div class="r" style="left:298.7px;top:1455.9px;width:236.8px;height:1.0px;background:#e4e5ea;"></div>
<div class="r" style="left:395.5px;top:1236.9px;width:15.0px;height:15.0px;background:#2bb3fc;border-radius:50%;"></div>
<div class="t" style="right:1048.5px;text-align:right;top:1235px;font-size:16.3px;line-height:18px;color:#2c2e37;">competitor1.com</div>
<div class="r" style="left:546.4px;top:1268.7px;width:237.4px;height:1.3px;background:#c2c5cd;"></div>
<div class="r" style="left:546.4px;top:1315.7px;width:237.4px;height:1.0px;background:#e4e5ea;"></div>
<div class="r" style="left:546.4px;top:1362.6px;width:237.4px;height:1.0px;background:#e4e5ea;"></div>
<div class="r" style="left:546.4px;top:1409.3px;width:237.4px;height:1.0px;background:#e4e5ea;"></div>
<div class="r" style="left:546.4px;top:1455.9px;width:237.4px;height:1.0px;background:#e4e5ea;"></div>
<div class="r" style="left:640.7px;top:1236.9px;width:15.0px;height:15.0px;background:#59ddaa;border-radius:50%;"></div>
<div class="t" style="right:800.2px;text-align:right;top:1235px;font-size:16.3px;line-height:18px;color:#2c2e37;">competitor2.com</div>
<div class="r" style="left:795.0px;top:1268.7px;width:236.6px;height:1.3px;background:#c2c5cd;"></div>
<div class="r" style="left:795.0px;top:1315.7px;width:236.6px;height:1.0px;background:#e4e5ea;"></div>
<div class="r" style="left:795.0px;top:1362.6px;width:236.6px;height:1.0px;background:#e4e5ea;"></div>
<div class="r" style="left:795.0px;top:1409.3px;width:236.6px;height:1.0px;background:#e4e5ea;"></div>
<div class="r" style="left:795.0px;top:1455.9px;width:236.6px;height:1.0px;background:#e4e5ea;"></div>
<div class="r" style="left:887.9px;top:1236.9px;width:15.0px;height:15.0px;background:#fd8c45;border-radius:50%;"></div>
<div class="t" style="right:552.4px;text-align:right;top:1235px;font-size:16.3px;line-height:18px;color:#2c2e37;">competitor3.com</div>
<div class="r" style="left:1042.2px;top:1268.7px;width:237.5px;height:1.3px;background:#c2c5cd;"></div>
<div class="r" style="left:1042.2px;top:1315.7px;width:237.5px;height:1.0px;background:#e4e5ea;"></div>
<div class="r" style="left:1042.2px;top:1362.6px;width:237.5px;height:1.0px;background:#e4e5ea;"></div>
<div class="r" style="left:1042.2px;top:1409.3px;width:237.5px;height:1.0px;background:#e4e5ea;"></div>
<div class="r" style="left:1042.2px;top:1455.9px;width:237.5px;height:1.0px;background:#e4e5ea;"></div>
<div class="r" style="left:1136.9px;top:1236.9px;width:15.0px;height:15.0px;background:#b425ba;border-radius:50%;"></div>
<div class="t" style="right:304.3px;text-align:right;top:1235px;font-size:16.3px;line-height:18px;color:#2c2e37;">competitor4.com</div>
<div class="r" style="left:1290.6px;top:1268.7px;width:237.1px;height:1.3px;background:#c2c5cd;"></div>
<div class="r" style="left:1290.6px;top:1315.7px;width:237.1px;height:1.0px;background:#e4e5ea;"></div>
<div class="r" style="left:1290.6px;top:1362.6px;width:237.1px;height:1.0px;background:#e4e5ea;"></div>
<div class="r" style="left:1290.6px;top:1409.3px;width:237.1px;height:1.0px;background:#e4e5ea;"></div>
<div class="r" style="left:1290.6px;top:1455.9px;width:237.1px;height:1.0px;background:#e4e5ea;"></div>
<div class="r" style="left:1385.2px;top:1236.9px;width:15.0px;height:15.0px;background:#fdc43d;border-radius:50%;"></div>
<div class="t" style="right:56.3px;text-align:right;top:1235px;font-size:16.3px;line-height:18px;color:#2c2e37;">competitor5.com</div>
<div class="t" style="right:1064.2px;text-align:right;top:1282px;font-size:17.4px;line-height:20px;color:#6c6e79;">n/a</div>
<div class="r" style="left:546.4px;top:1270.0px;width:82.1px;height:45.7px;background:#e5f3fd;"></div>
<div class="t" style="right:898.6px;text-align:right;top:1282px;font-size:17.4px;line-height:20px;color:#6c6e79;">35.13%</div>
<div class="t" style="right:815.9px;text-align:right;top:1282px;font-size:17.4px;line-height:20px;color:#202229;">8K</div>
<div class="t" style="right:568.1px;text-align:right;top:1282px;font-size:17.4px;line-height:20px;color:#6c6e79;">n/a</div>
<div class="t" style="right:320.0px;text-align:right;top:1282px;font-size:17.4px;line-height:20px;color:#6c6e79;">n/a</div>
<div class="t" style="right:72.0px;text-align:right;top:1282px;font-size:17.4px;line-height:20px;color:#6c6e79;">n/a</div>
<div class="t" style="left:81.5px;top:1280px;font-size:18.5px;line-height:21px;color:#202229;">Ecuador</div>
<div class="t" style="right:1064.2px;text-align:right;top:1329px;font-size:17.4px;line-height:20px;color:#6c6e79;">n/a</div>
<div class="r" style="left:546.4px;top:1316.7px;width:40.1px;height:45.9px;background:#e5f3fd;"></div>
<div class="t" style="right:898.6px;text-align:right;top:1329px;font-size:17.4px;line-height:20px;color:#6c6e79;">17.96%</div>
<div class="t" style="right:815.9px;text-align:right;top:1329px;font-size:17.4px;line-height:20px;color:#202229;">4.1K</div>
<div class="t" style="right:568.1px;text-align:right;top:1329px;font-size:17.4px;line-height:20px;color:#6c6e79;">n/a</div>
<div class="t" style="right:320.0px;text-align:right;top:1329px;font-size:17.4px;line-height:20px;color:#6c6e79;">n/a</div>
<div class="t" style="right:72.0px;text-align:right;top:1329px;font-size:17.4px;line-height:20px;color:#6c6e79;">n/a</div>
<div class="t" style="left:81.5px;top:1326px;font-size:18.5px;line-height:21px;color:#202229;">United Kingdom</div>
<div class="t" style="right:1064.2px;text-align:right;top:1377px;font-size:17.4px;line-height:20px;color:#6c6e79;">n/a</div>
<div class="r" style="left:546.4px;top:1363.6px;width:23.6px;height:45.7px;background:#e5f3fd;"></div>
<div class="t" style="right:898.6px;text-align:right;top:1377px;font-size:17.4px;line-height:20px;color:#6c6e79;">10.69%</div>
<div class="t" style="right:815.9px;text-align:right;top:1377px;font-size:17.4px;line-height:20px;color:#202229;">2.4K</div>
<div class="t" style="right:568.1px;text-align:right;top:1377px;font-size:17.4px;line-height:20px;color:#6c6e79;">n/a</div>
<div class="t" style="right:320.0px;text-align:right;top:1377px;font-size:17.4px;line-height:20px;color:#6c6e79;">n/a</div>
<div class="t" style="right:72.0px;text-align:right;top:1377px;font-size:17.4px;line-height:20px;color:#6c6e79;">n/a</div>
<div class="t" style="left:81.5px;top:1373px;font-size:18.5px;line-height:21px;color:#202229;">South Africa</div>
<div class="t" style="right:1064.2px;text-align:right;top:1424px;font-size:17.4px;line-height:20px;color:#6c6e79;">n/a</div>
<div class="r" style="left:546.4px;top:1410.3px;width:20.6px;height:45.6px;background:#e5f3fd;"></div>
<div class="t" style="right:898.6px;text-align:right;top:1424px;font-size:17.4px;line-height:20px;color:#6c6e79;">9.27%</div>
<div class="t" style="right:815.9px;text-align:right;top:1424px;font-size:17.4px;line-height:20px;color:#202229;">2.1K</div>
<div class="t" style="right:568.1px;text-align:right;top:1424px;font-size:17.4px;line-height:20px;color:#6c6e79;">n/a</div>
<div class="t" style="right:320.0px;text-align:right;top:1424px;font-size:17.4px;line-height:20px;color:#6c6e79;">n/a</div>
<div class="t" style="right:72.0px;text-align:right;top:1424px;font-size:17.4px;line-height:20px;color:#6c6e79;">n/a</div>
<div class="t" style="left:81.5px;top:1420px;font-size:18.5px;line-height:21px;color:#202229;">Germany</div>
<div class="r" style="left:298.7px;top:1456.9px;width:122.7px;height:46.1px;background:#e5f3fd;"></div>
<div class="t" style="right:1146.3px;text-align:right;top:1470px;font-size:17.4px;line-height:20px;color:#6c6e79;">52.48%</div>
<div class="t" style="right:1064.2px;text-align:right;top:1470px;font-size:17.4px;line-height:20px;color:#202229;">1.4K</div>
<div class="r" style="left:546.4px;top:1456.9px;width:11.5px;height:46.1px;background:#e5f3fd;"></div>
<div class="t" style="right:898.6px;text-align:right;top:1470px;font-size:17.4px;line-height:20px;color:#6c6e79;">5.7%</div>
<div class="t" style="right:815.9px;text-align:right;top:1470px;font-size:17.4px;line-height:20px;color:#202229;">1.3K</div>
<div class="r" style="left:795.0px;top:1456.9px;width:222.5px;height:46.1px;background:#e5f3fd;"></div>
<div class="t" style="right:650.0px;text-align:right;top:1470px;font-size:17.4px;line-height:20px;color:#6c6e79;">94.89%</div>
<div class="t" style="right:568.1px;text-align:right;top:1470px;font-size:17.4px;line-height:20px;color:#202229;">112.9K</div>
<div class="r" style="left:1042.2px;top:1456.9px;width:49.7px;height:46.1px;background:#e5f3fd;"></div>
<div class="t" style="right:402.8px;text-align:right;top:1470px;font-size:17.4px;line-height:20px;color:#6c6e79;">21.53%</div>
<div class="t" style="right:320.0px;text-align:right;top:1470px;font-size:17.4px;line-height:20px;color:#202229;">3.9K</div>
<div class="r" style="left:1290.6px;top:1456.9px;width:65.7px;height:46.1px;background:#e5f3fd;"></div>
<div class="t" style="right:154.4px;text-align:right;top:1470px;font-size:17.4px;line-height:20px;color:#6c6e79;">28%</div>
<div class="t" style="right:72.0px;text-align:right;top:1470px;font-size:17.4px;line-height:20px;color:#202229;">6.9K</div>
<div class="t" style="left:81.5px;top:1467px;font-size:18.5px;line-height:21px;color:#202229;">United States</div>
<div class="t" style="left:51.4px;top:1540px;font-size:19.3px;line-height:21px;color:#2d5fae;">View full report</div>
<div class="r" style="left:52.3px;top:1284px;width:18px;height:14px;background:linear-gradient(#ffd100 0 50%,#0b3fa8 50% 75%,#e3262e 75%);"><div class="r" style="left:7px;top:4px;width:4px;height:5px;background:#8a6d3b;border-radius:2px"></div></div>
<svg width="18" height="14" viewBox="0 0 60 40" style="position:absolute;left:52.3px;top:1330.5px"><rect width="60" height="40" fill="#1f3a8a"/><path d="M0 0 L60 40 M60 0 L0 40" stroke="#fff" stroke-width="8"/><path d="M0 0 L60 40 M60 0 L0 40" stroke="#c8102e" stroke-width="3"/><path d="M30 0 V40 M0 20 H60" stroke="#fff" stroke-width="12"/><path d="M30 0 V40 M0 20 H60" stroke="#c8102e" stroke-width="7"/></svg>
<svg width="18" height="14" viewBox="0 0 90 70" preserveAspectRatio="none" style="position:absolute;left:52.3px;top:1377.5px"><rect width="90" height="35" fill="#e03c31"/><rect y="35" width="90" height="35" fill="#1c3f94"/><path d="M0 0 L45 35 L0 70 M45 35 H90" stroke="#fff" stroke-width="22" fill="none"/><path d="M0 0 L45 35 L0 70 M45 35 H90" stroke="#007a4d" stroke-width="13" fill="none"/><path d="M0 12 L29 35 L0 58 Z" fill="#ffb612"/><path d="M0 19 L20 35 L0 51 Z" fill="#000"/></svg>
<div class="r" style="left:52.3px;top:1424.5px;width:18px;height:14px;background:linear-gradient(#111 0 33.3%,#dd0000 33.3% 66.6%,#ffce00 66.6%);"></div>
<svg width="18" height="14" viewBox="0 0 18 14" style="position:absolute;left:52.3px;top:1471px"><rect width="18" height="14" fill="#fff"/><rect y="0" width="18" height="1.1" fill="#c8283c"/><rect y="2" width="18" height="1.1" fill="#c8283c"/><rect y="4" width="18" height="1.1" fill="#c8283c"/><rect y="6" width="18" height="1.1" fill="#c8283c"/><rect y="8" width="18" height="1.1" fill="#c8283c"/><rect y="10" width="18" height="1.1" fill="#c8283c"/><rect y="12" width="18" height="1.1" fill="#c8283c"/><rect width="8.5" height="7.5" fill="#3c3b8e"/></svg>
</body></html>
